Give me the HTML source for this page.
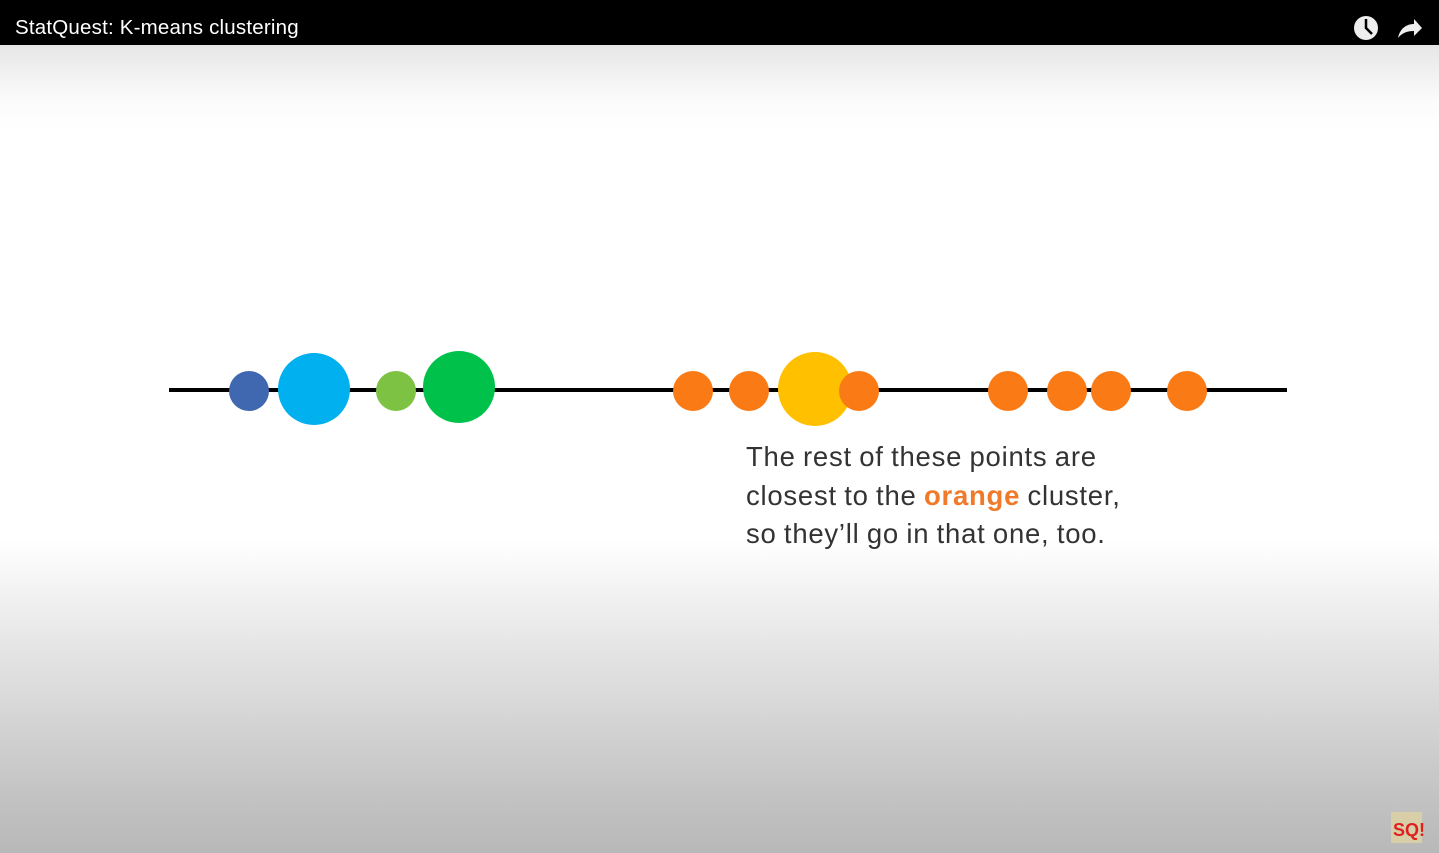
<!DOCTYPE html>
<html><head><style>
html,body{margin:0;padding:0;width:1439px;height:853px;overflow:hidden}
body{position:relative;background:linear-gradient(to bottom,#bdbdbd 0px,#e6e6e6 45px,#fbfbfb 100px,#fff 130px,#fff 540px,#f0f0f0 600px,#d9d9d9 700px,#c2c2c2 800px,#b8b8b8 853px);font-family:"Liberation Sans",sans-serif}
.bar{position:absolute;left:0;top:0;width:1439px;height:45px;background:#000}
.title{position:absolute;left:15px;top:16px;color:#fff;font-size:20.5px;letter-spacing:0.2px}
.txt{position:absolute;left:746px;top:438px;font-size:27.5px;line-height:38.5px;color:#333;letter-spacing:0.75px;word-spacing:-1px}
</style></head><body>
<div class="bar"></div>
<div class="title">StatQuest: K-means clustering</div>
<svg style="position:absolute;left:0;top:0" width="1439" height="853">
<circle cx="1366" cy="28" r="12" fill="#eee"/>
<path d="M1366 19 V28 L1372 34" stroke="#000" stroke-width="2.5" fill="none"/>
<path d="M1398 38 C1400 28 1407 24 1414 24 V19 L1422 28 L1414 36 V31 C1407 31 1402 33 1398 38 Z" fill="#eee"/>
<line x1="169" y1="390" x2="1287" y2="390" stroke="#000" stroke-width="4"/>
<circle cx="249" cy="391" r="20" fill="#4068b0"/>
<circle cx="314" cy="389" r="36" fill="#00b0ef"/>
<circle cx="396" cy="391" r="20" fill="#7dc242"/>
<circle cx="459" cy="387" r="36" fill="#00c24b"/>
<circle cx="693" cy="391" r="20" fill="#fa7a16"/>
<circle cx="749" cy="391" r="20" fill="#fa7a16"/>
<circle cx="815" cy="389" r="37" fill="#ffc000"/>
<circle cx="859" cy="391" r="20" fill="#fa7a16"/>
<circle cx="1008" cy="391" r="20" fill="#fa7a16"/>
<circle cx="1067" cy="391" r="20" fill="#fa7a16"/>
<circle cx="1111" cy="391" r="20" fill="#fa7a16"/>
<circle cx="1187" cy="391" r="20" fill="#fa7a16"/>
<rect x="1391" y="812" width="31" height="31" fill="#d8cfa8"/>
<text x="1393" y="836" font-size="18" font-weight="bold" fill="#e02020" font-family="Liberation Sans">SQ!</text>
</svg>
<div class="txt">The rest of these points are<br>closest to the <span style="color:#f07a2a;font-weight:bold">orange</span> cluster,<br>so they’ll go in that one, too.</div>
</body></html>
